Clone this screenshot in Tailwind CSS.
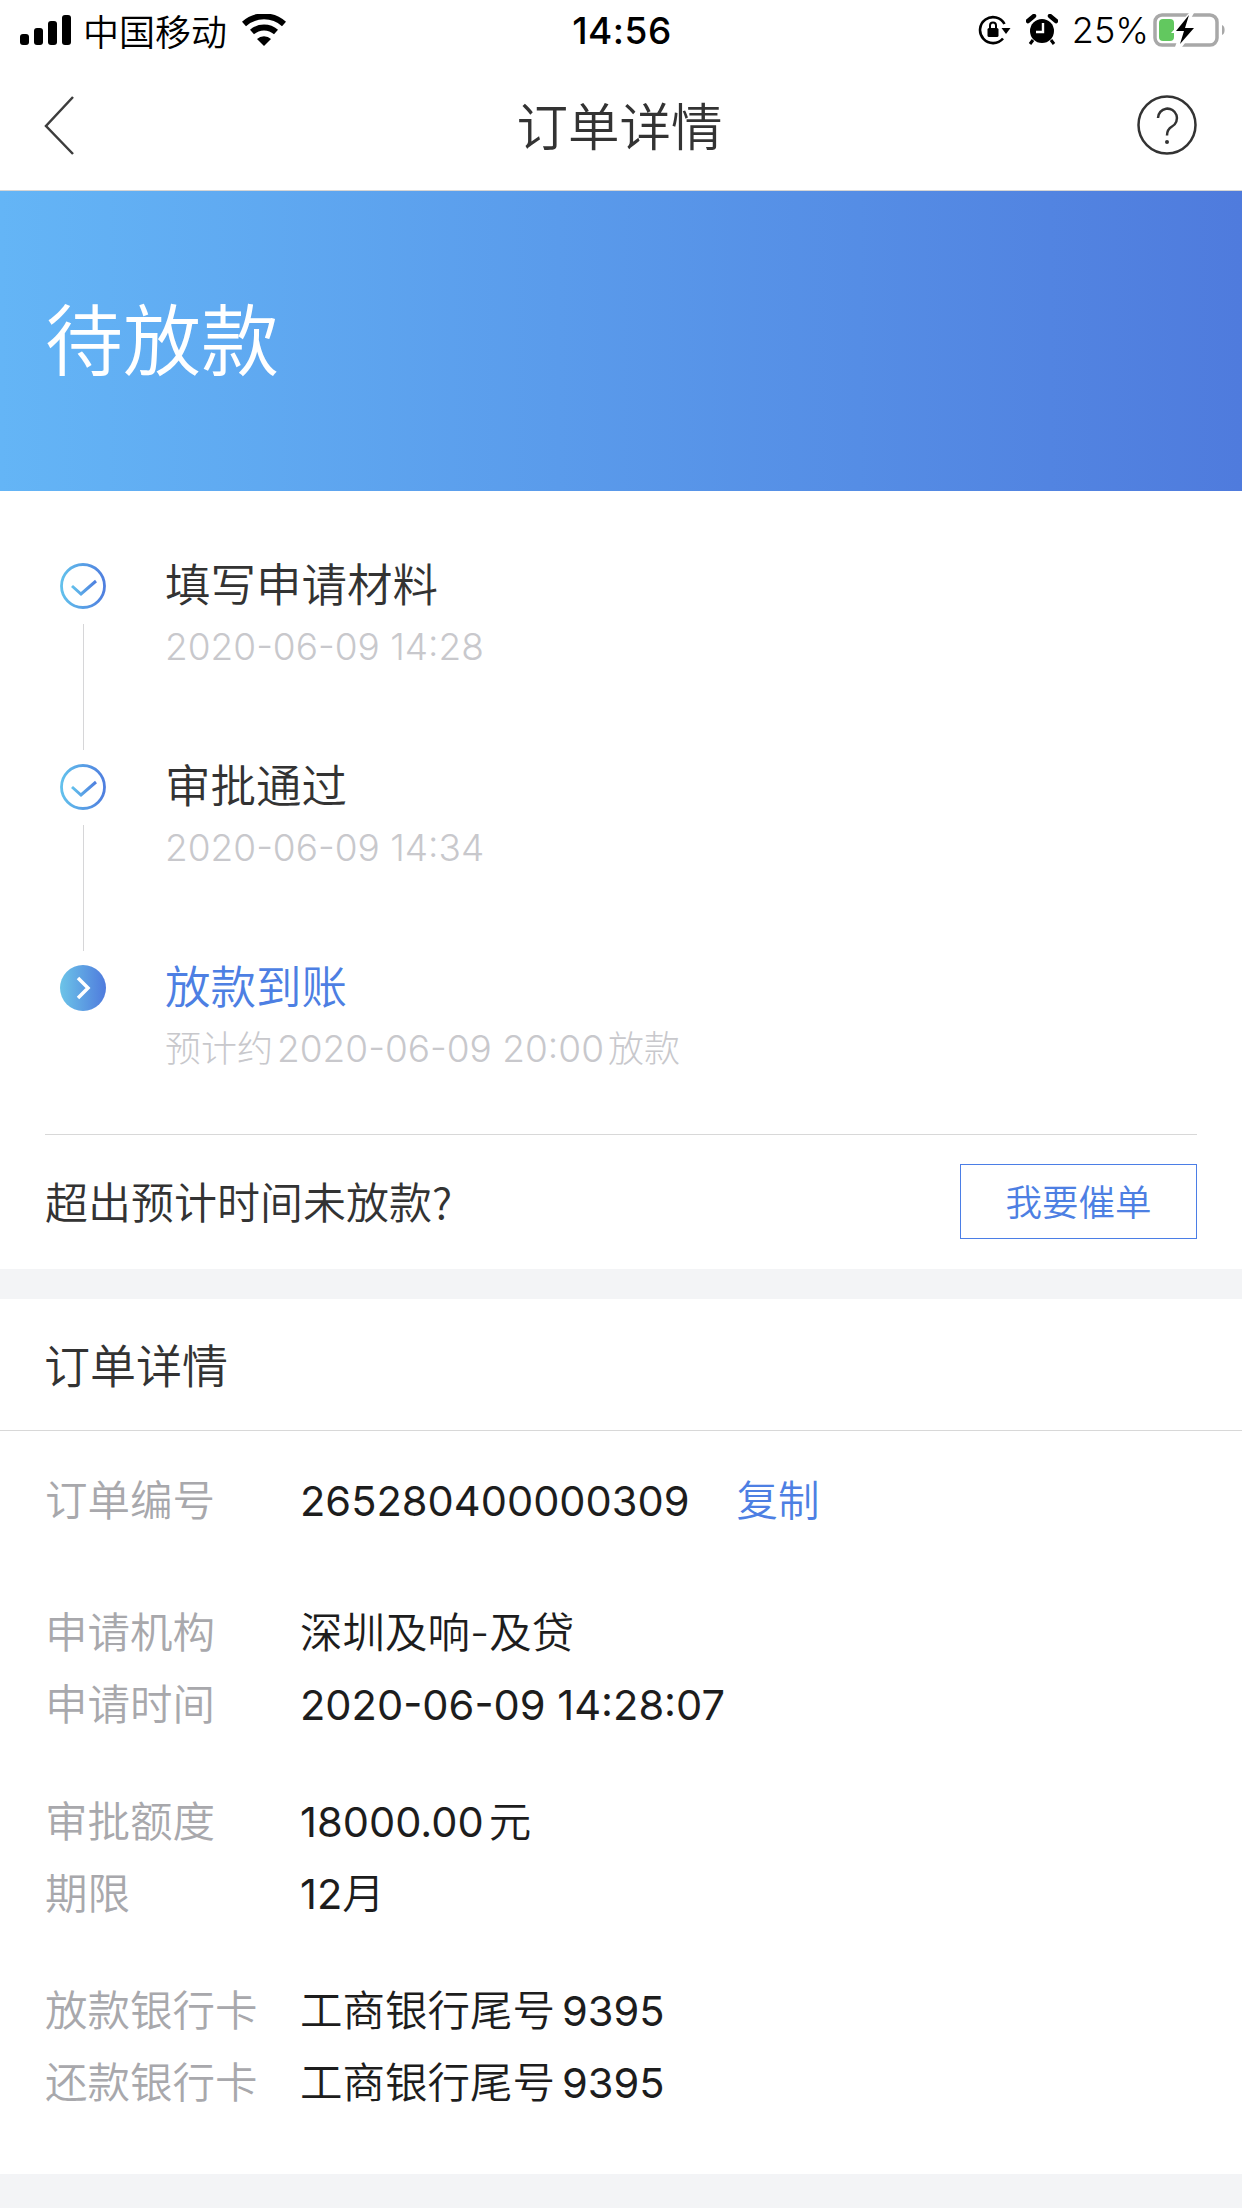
<!DOCTYPE html>
<html lang="zh-CN"><head><meta charset="utf-8"><script src="https://cdn.jsdelivr.net/npm/@tailwindcss/browser@4"></script></head>
<body class="bg-white">
<div class="w-[1242px] h-[2208px] overflow-hidden bg-white font-['Inter','Noto_Sans_CJK_SC',sans-serif]">
  <!-- status bar -->
  <div class="h-[60px] flex items-center pl-[20px] pr-[15px] text-black">
    <div class="flex-1 flex items-center">
      <svg width="51" height="30" viewBox="0 0 51 30" fill="#000"><rect x="0" y="19" width="9" height="11" rx="3"/><rect x="14" y="13" width="9" height="17" rx="3"/><rect x="28" y="6" width="9" height="24" rx="3"/><rect x="42" y="0" width="9" height="30" rx="3"/></svg>
      <span class="ml-[12px] text-[36px] leading-none font-['Noto_Sans_CJK_SC'] font-[350]">中国移动</span>
      <svg class="ml-[14px]" width="46" height="32" viewBox="0 0 46 32"><path d="M3 10 A30 30 0 0 1 43 10" fill="none" stroke="#000" stroke-width="6"/><path d="M11 18 A18 18 0 0 1 35 18" fill="none" stroke="#000" stroke-width="6"/><path d="M16 25 A10 10 0 0 1 30 25 L23 32 Z" fill="#000"/></svg>
    </div>
    <span class="text-[37px] leading-none font-medium tracking-[0.5px] mr-[3px]">14:56</span>
    <div class="flex-1 flex items-center justify-end">
      <svg width="33" height="30" viewBox="0 0 33 30"><path d="M26.500 9 A13 13 0 1 0 25 23.500" fill="none" stroke="#000" stroke-width="2.600"/><path d="M23.500 13h9l-4.500 6z" fill="#000"/><rect x="9.500" y="13" width="11" height="9" rx="1.500" fill="#000"/><path d="M12 13v-2.500a3 3 0 0 1 6 0v2.500" fill="none" stroke="#000" stroke-width="2"/></svg>
      <svg class="ml-[15px]" width="32" height="32" viewBox="0 0 32 32"><circle cx="16" cy="17" r="12" fill="#000"/><path d="M17 9v9h-7" fill="none" stroke="#fff" stroke-width="2.400"/><path d="M2 7 L8 2 M30 7 L24 2" stroke="#000" stroke-width="4.500" stroke-linecap="round"/><path d="M7 26l-3 4M25 26l3 4" stroke="#000" stroke-width="3"/></svg>
      <span class="ml-[14px] text-[36px] leading-none font-light">25%</span>
      <svg class="ml-[4px]" width="74" height="34" viewBox="0 0 74 34"><rect x="2" y="2" width="62" height="30" rx="7" fill="none" stroke="#a8a8a8" stroke-width="3.500"/><rect x="6" y="6" width="15" height="22" rx="4" fill="#62c85f"/><path d="M69 12c3.500 1 3.500 9 0 10z" fill="#a8a8a8"/><path d="M36 0 L18 20 H27 L22 34 L29 34 L44 14 H33 L41 0 Z" fill="#fff"/><path d="M36 2 L23 18 H31 L27 31 L41 15 H32 Z" fill="#000"/></svg>
    </div>
  </div>
  <!-- nav -->
  <div class="h-[131px] flex items-center justify-between pl-[42px] pr-[45px] border-b-[1px] border-[#d5d5d5]">
    <div class="w-[100px]"><svg width="34" height="60" viewBox="0 0 34 60"><path d="M31 2 L4 31 L31 59" fill="none" stroke="#3d3d3d" stroke-width="2.500"/></svg></div>
    <span class="text-[51.500px] leading-none text-[#333] font-['Noto_Sans_CJK_SC'] font-[350] -mt-[3px]">订单详情</span>
    <div class="w-[100px] flex justify-end"><svg width="60" height="70" viewBox="0 0 60 70"><circle cx="30" cy="35" r="28.500" fill="none" stroke="#333" stroke-width="2.500"/><path d="M21 28 a9.500 9.500 0 1 1 14 8.500 c-3.500 2 -5 4 -5 9" fill="none" stroke="#333" stroke-width="2.500"/><circle cx="30" cy="52" r="2" fill="#333"/></svg></div>
  </div>
  <!-- banner -->
  <div class="h-[300px] bg-linear-to-r from-[#64b5f6] to-[#4f7bdd] flex items-center pl-[45px]">
    <span class="text-[78px] leading-none text-white font-['Noto_Sans_CJK_SC'] font-[350] -mt-[10px]">待放款</span>
  </div>
  <!-- timeline -->
  <div class="pt-[62px] h-[778px] flex flex-col">
    <div class="px-[60px] flex flex-col h-[581px] shrink-0">
      <div class="flex h-[201px]">
        <div class="w-[46px] flex flex-col items-center">
          <svg class="mt-[10px]" width="46" height="46" viewBox="0 0 46 46"><defs><linearGradient id="g" x1="0" x2="1" y1="0" y2="0"><stop offset="0" stop-color="#62c0ec"/><stop offset="1" stop-color="#4f7fdf"/></linearGradient></defs><circle cx="23" cy="23" r="21.500" fill="none" stroke="url(#g)" stroke-width="2.800"/><path d="M12 23 L21 31 L36 18" fill="none" stroke="url(#g)" stroke-width="3"/></svg>
          <div class="w-px h-[126px] mt-[15px] bg-[#d6d6d8]"></div>
        </div>
        <div class="ml-[59px] -mt-[1px]">
          <div class="text-[45.500px] leading-[60px] text-[#333] font-['Noto_Sans_CJK_SC'] font-[350]">填写申请材料</div>
          <div class="mt-[10px] text-[37px] leading-[50px] text-[#c8c8cc] font-light">2020-06-09 14:28</div>
        </div>
      </div>
      <div class="flex h-[201px]">
        <div class="w-[46px] flex flex-col items-center">
          <svg class="mt-[10px]" width="46" height="46" viewBox="0 0 46 46"><circle cx="23" cy="23" r="21.500" fill="none" stroke="url(#g)" stroke-width="2.800"/><path d="M12 23 L21 31 L36 18" fill="none" stroke="url(#g)" stroke-width="3"/></svg>
          <div class="w-px h-[126px] mt-[15px] bg-[#d6d6d8]"></div>
        </div>
        <div class="ml-[59px] -mt-[1px]">
          <div class="text-[45.500px] leading-[60px] text-[#333] font-['Noto_Sans_CJK_SC'] font-[350]">审批通过</div>
          <div class="mt-[10px] text-[37px] leading-[50px] text-[#c8c8cc] font-light">2020-06-09 14:34</div>
        </div>
      </div>
      <div class="flex h-[179px]">
        <div class="w-[46px] flex flex-col items-center">
          <svg class="mt-[10px]" width="46" height="46" viewBox="0 0 46 46"><defs><linearGradient id="h" x1="0" x2="1" y1="0" y2="0"><stop offset="0" stop-color="#6cc4e8"/><stop offset="1" stop-color="#4f7bdd"/></linearGradient></defs><circle cx="23" cy="23" r="23" fill="url(#h)"/><path d="M18 13 L28 23 L18 33" fill="none" stroke="#fff" stroke-width="3.500"/></svg>
        </div>
        <div class="ml-[59px] -mt-[1px]">
          <div class="text-[45.500px] leading-[60px] text-[#4d7fe3] font-['Noto_Sans_CJK_SC'] font-[350]">放款到账</div>
          <div class="mt-[10px] text-[36px] leading-[50px] text-[#c8c8cc] font-light whitespace-nowrap">预计约<span class="mx-[4px] text-[37px]">2020-06-09 20:00</span>放款</div>
        </div>
      </div>
    </div>
    <div class="mx-[45px] border-t border-[#d8d8d8] h-[133px] flex items-center justify-between">
      <span class="text-[43px] leading-none text-[#333] font-['Noto_Sans_CJK_SC'] font-[350] -mt-[2px]">超出预计时间未放款?</span>
      <div class="w-[237px] h-[75px] border-[1px] border-[#4b7ee6] flex items-center justify-center text-[36.500px] text-[#4d7fe3] font-['Noto_Sans_CJK_SC'] font-[350]">我要催单</div>
    </div>
  </div>
  <div class="h-[30px] bg-[#f3f4f6]"></div>
  <!-- details -->
  <div class="h-[132px] border-b border-[#d8d8d8] flex items-center pb-[3px] pl-[44px] text-[46px] text-[#333] font-['Noto_Sans_CJK_SC'] font-[350]">订单详情</div>
  <div class="h-[743px] px-[45px] pt-[34px] text-[42.500px] leading-[72px] font-['Inter','Noto_Sans_CJK_SC'] font-[350]">
    <div class="flex"><span class="w-[255px] text-[#a8a8ac]">订单编号</span><span class="text-[#1d1d1d] text-[41.600px] font-normal">265280400000309</span><span class="ml-[47px] text-[41.500px] text-[#4d7fe3]">复制</span></div>
    <div class="flex mt-[60px]"><span class="w-[255px] text-[#a8a8ac]">申请机构</span><span class="text-[#1d1d1d]">深圳及响-及贷</span></div>
    <div class="flex"><span class="w-[255px] text-[#a8a8ac]">申请时间</span><span class="text-[#1d1d1d] text-[41.600px] font-normal">2020-06-09 14:28:07</span></div>
    <div class="flex mt-[45px]"><span class="w-[255px] text-[#a8a8ac]">审批额度</span><span class="text-[#1d1d1d]"><span class="text-[41.600px] font-normal">18000.00</span><span class="ml-[5px]">元</span></span></div>
    <div class="flex"><span class="w-[255px] text-[#a8a8ac]">期限</span><span class="text-[#1d1d1d] text-[41.600px] font-normal">12<span class="text-[42.500px] font-[350]">月</span></span></div>
    <div class="flex mt-[45px]"><span class="w-[255px] text-[#a8a8ac]">放款银行卡</span><span class="text-[#1d1d1d]">工商银行尾号<span class="ml-[7px] text-[41.600px] font-normal">9395</span></span></div>
    <div class="flex"><span class="w-[255px] text-[#a8a8ac]">还款银行卡</span><span class="text-[#1d1d1d]">工商银行尾号<span class="ml-[7px] text-[41.600px] font-normal">9395</span></span></div>
  </div>
  <div class="h-[34px] bg-[#f3f4f6]"></div>
</div>
</body></html>
